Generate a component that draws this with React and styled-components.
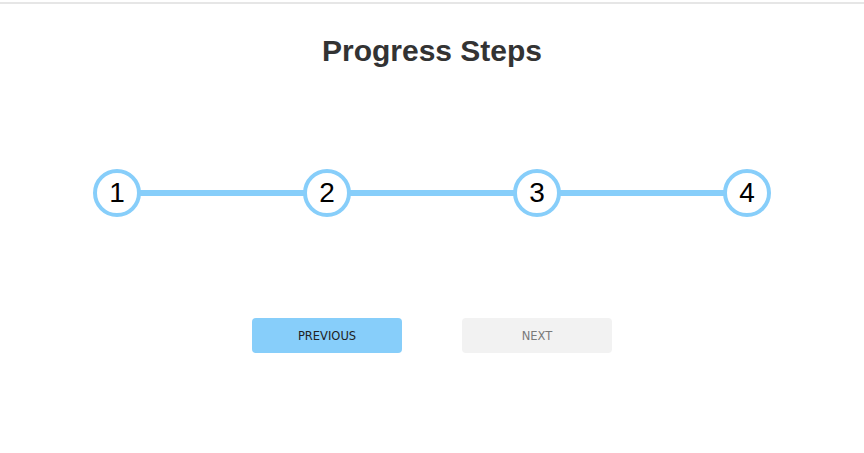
import React, { useState } from "react";
import styled, { createGlobalStyle } from "styled-components";

const GlobalStyle = createGlobalStyle`
  body {
    margin: 0;
    background: #ffffff;
    font-family: "Liberation Sans", Arial, sans-serif;
  }
`;

const Page = styled.div`
  margin-top: 2px;
  border-top: 2px solid #e6e6e6;
  padding-top: 30px;
  display: flex;
  flex-direction: column;
  align-items: center;
`;

const Title = styled.h1`
  margin: 0;
  font-size: 30px;
  line-height: 34px;
  font-weight: 700;
  color: #333333;
`;

const Steps = styled.div`
  position: relative;
  width: 678px;
  height: 48px;
  margin-top: 101px;
  display: flex;
  justify-content: space-between;
  align-items: center;
`;

const Track = styled.div`
  position: absolute;
  left: 24px;
  right: 24px;
  top: 21px;
  height: 6px;
  background: #e0e0e0;
`;

const Fill = styled.div`
  height: 100%;
  background: #87cefa;
`;

const Circle = styled.div`
  position: relative;
  z-index: 1;
  box-sizing: border-box;
  width: 48px;
  height: 48px;
  border-radius: 50%;
  border: 4px solid ${(p) => (p.$active ? "#87cefa" : "#e0e0e0")};
  background: #ffffff;
  display: flex;
  align-items: center;
  justify-content: center;
  font-size: 28px;
  color: #000000;
`;

const Buttons = styled.div`
  display: flex;
  gap: 60px;
  margin-top: 101px;
`;

const Button = styled.button`
  width: 150px;
  height: 35px;
  padding: 1px 0 0;
  border: none;
  border-radius: 4px;
  font-family: "DejaVu Sans", Tahoma, sans-serif;
  font-size: 11.5px;
  text-transform: uppercase;
  cursor: pointer;
  background: ${(p) => (p.disabled ? "#f2f2f2" : "#87cefa")};
  color: ${(p) => (p.disabled ? "#7a7a7a" : "#222222")};
`;

export default function App() {
  const [step, setStep] = useState(4);
  const total = 4;

  return (
    <>
      <GlobalStyle />
      <Page>
        <Title>Progress Steps</Title>
        <Steps>
          <Track>
            <Fill style={{ width: `${((step - 1) / (total - 1)) * 100}%` }} />
          </Track>
          {[1, 2, 3, 4].map((n) => (
            <Circle key={n} $active={n <= step}>
              {n}
            </Circle>
          ))}
        </Steps>
        <Buttons>
          <Button disabled={step === 1} onClick={() => setStep(step - 1)}>
            Previous
          </Button>
          <Button disabled={step === total} onClick={() => setStep(step + 1)}>
            Next
          </Button>
        </Buttons>
      </Page>
    </>
  );
}
